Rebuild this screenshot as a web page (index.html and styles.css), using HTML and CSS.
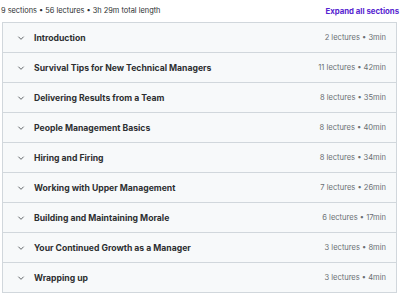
FILE: index.html
```html
<!DOCTYPE html>
<html lang="en">
<head>
  <meta charset="UTF-8" />
  <title>Course content</title>
  <link rel="stylesheet" href="styles.css">
</head>
<body>
  <div class="content-header">
    <span class="summary">9 sections • 56 lectures • 3h 29m total length</span>
    <button class="expand-all">Expand all sections</button>
  </div>

  <div class="sections">
    <div class="section">
      <span class="chevron"><svg viewBox="0 0 6 6"><path d="M1 2l2 2l2-2" /></svg></span>
      <span class="title">Introduction</span>
      <span class="meta">2 lectures • 3min</span>
    </div>
    <div class="section">
      <span class="chevron"><svg viewBox="0 0 6 6"><path d="M1 2l2 2l2-2" /></svg></span>
      <span class="title">Survival Tips for New Technical Managers</span>
      <span class="meta">11 lectures • 42min</span>
    </div>
    <div class="section">
      <span class="chevron"><svg viewBox="0 0 6 6"><path d="M1 2l2 2l2-2" /></svg></span>
      <span class="title">Delivering Results from a Team</span>
      <span class="meta">8 lectures • 35min</span>
    </div>
    <div class="section">
      <span class="chevron"><svg viewBox="0 0 6 6"><path d="M1 2l2 2l2-2" /></svg></span>
      <span class="title">People Management Basics</span>
      <span class="meta">8 lectures • 40min</span>
    </div>
    <div class="section">
      <span class="chevron"><svg viewBox="0 0 6 6"><path d="M1 2l2 2l2-2" /></svg></span>
      <span class="title">Hiring and Firing</span>
      <span class="meta">8 lectures • 34min</span>
    </div>
    <div class="section">
      <span class="chevron"><svg viewBox="0 0 6 6"><path d="M1 2l2 2l2-2" /></svg></span>
      <span class="title">Working with Upper Management</span>
      <span class="meta">7 lectures • 26min</span>
    </div>
    <div class="section">
      <span class="chevron"><svg viewBox="0 0 6 6"><path d="M1 2l2 2l2-2" /></svg></span>
      <span class="title">Building and Maintaining Morale</span>
      <span class="meta">6 lectures • 17min</span>
    </div>
    <div class="section">
      <span class="chevron"><svg viewBox="0 0 6 6"><path d="M1 2l2 2l2-2" /></svg></span>
      <span class="title">Your Continued Growth as a Manager</span>
      <span class="meta">3 lectures • 8min</span>
    </div>
    <div class="section">
      <span class="chevron"><svg viewBox="0 0 6 6"><path d="M1 2l2 2l2-2" /></svg></span>
      <span class="title">Wrapping up</span>
      <span class="meta">3 lectures • 4min</span>
    </div>
  </div>
</body>
</html>
```

FILE: styles.css
```css
:root {
  --text-color: #2d2f31;
  --muted: #6a6f73;
  --border: #d1d7dc;
  --row-bg: #f7f9fa;
  --purple: #5624d0;
}

* {
  box-sizing: border-box;
}

body {
  margin: 0;
  padding: 0 3px 0 2px;
  background: white;
  font-family: Inter, "Noto Sans", sans-serif;
  color: var(--text-color);
}

/* Header line */
.content-header {
  display: flex;
  justify-content: space-between;
  align-items: center;
  height: 22px;
  padding-bottom: 1px;
}

.summary {
  font-size: 7.4px;
  color: var(--text-color);
  margin-left: -1px;
}

.expand-all {
  background: none;
  border: none;
  padding: 0;
  margin-right: -2px;
  font-family: inherit;
  font-size: 7.8px;
  font-weight: 700;
  color: var(--purple);
  cursor: pointer;
}

/* Section list */
.sections {
  border: 1px solid var(--border);
  border-bottom: none;
}

.section {
  display: flex;
  align-items: center;
  height: 30px;
  padding: 0 10px 0 14px;
  background-color: var(--row-bg);
  border-bottom: 1px solid var(--border);
}

.chevron {
  display: flex;
  width: 8px;
  height: 8px;
  margin-right: 9px;
}

.chevron svg {
  width: 8px;
  height: 8px;
  fill: none;
  stroke: #55595d;
  stroke-width: 0.7;
}

.title {
  flex: 1;
  font-size: 8.65px;
  font-weight: 700;
}

.meta {
  font-size: 7.55px;
  color: var(--muted);
}
```
